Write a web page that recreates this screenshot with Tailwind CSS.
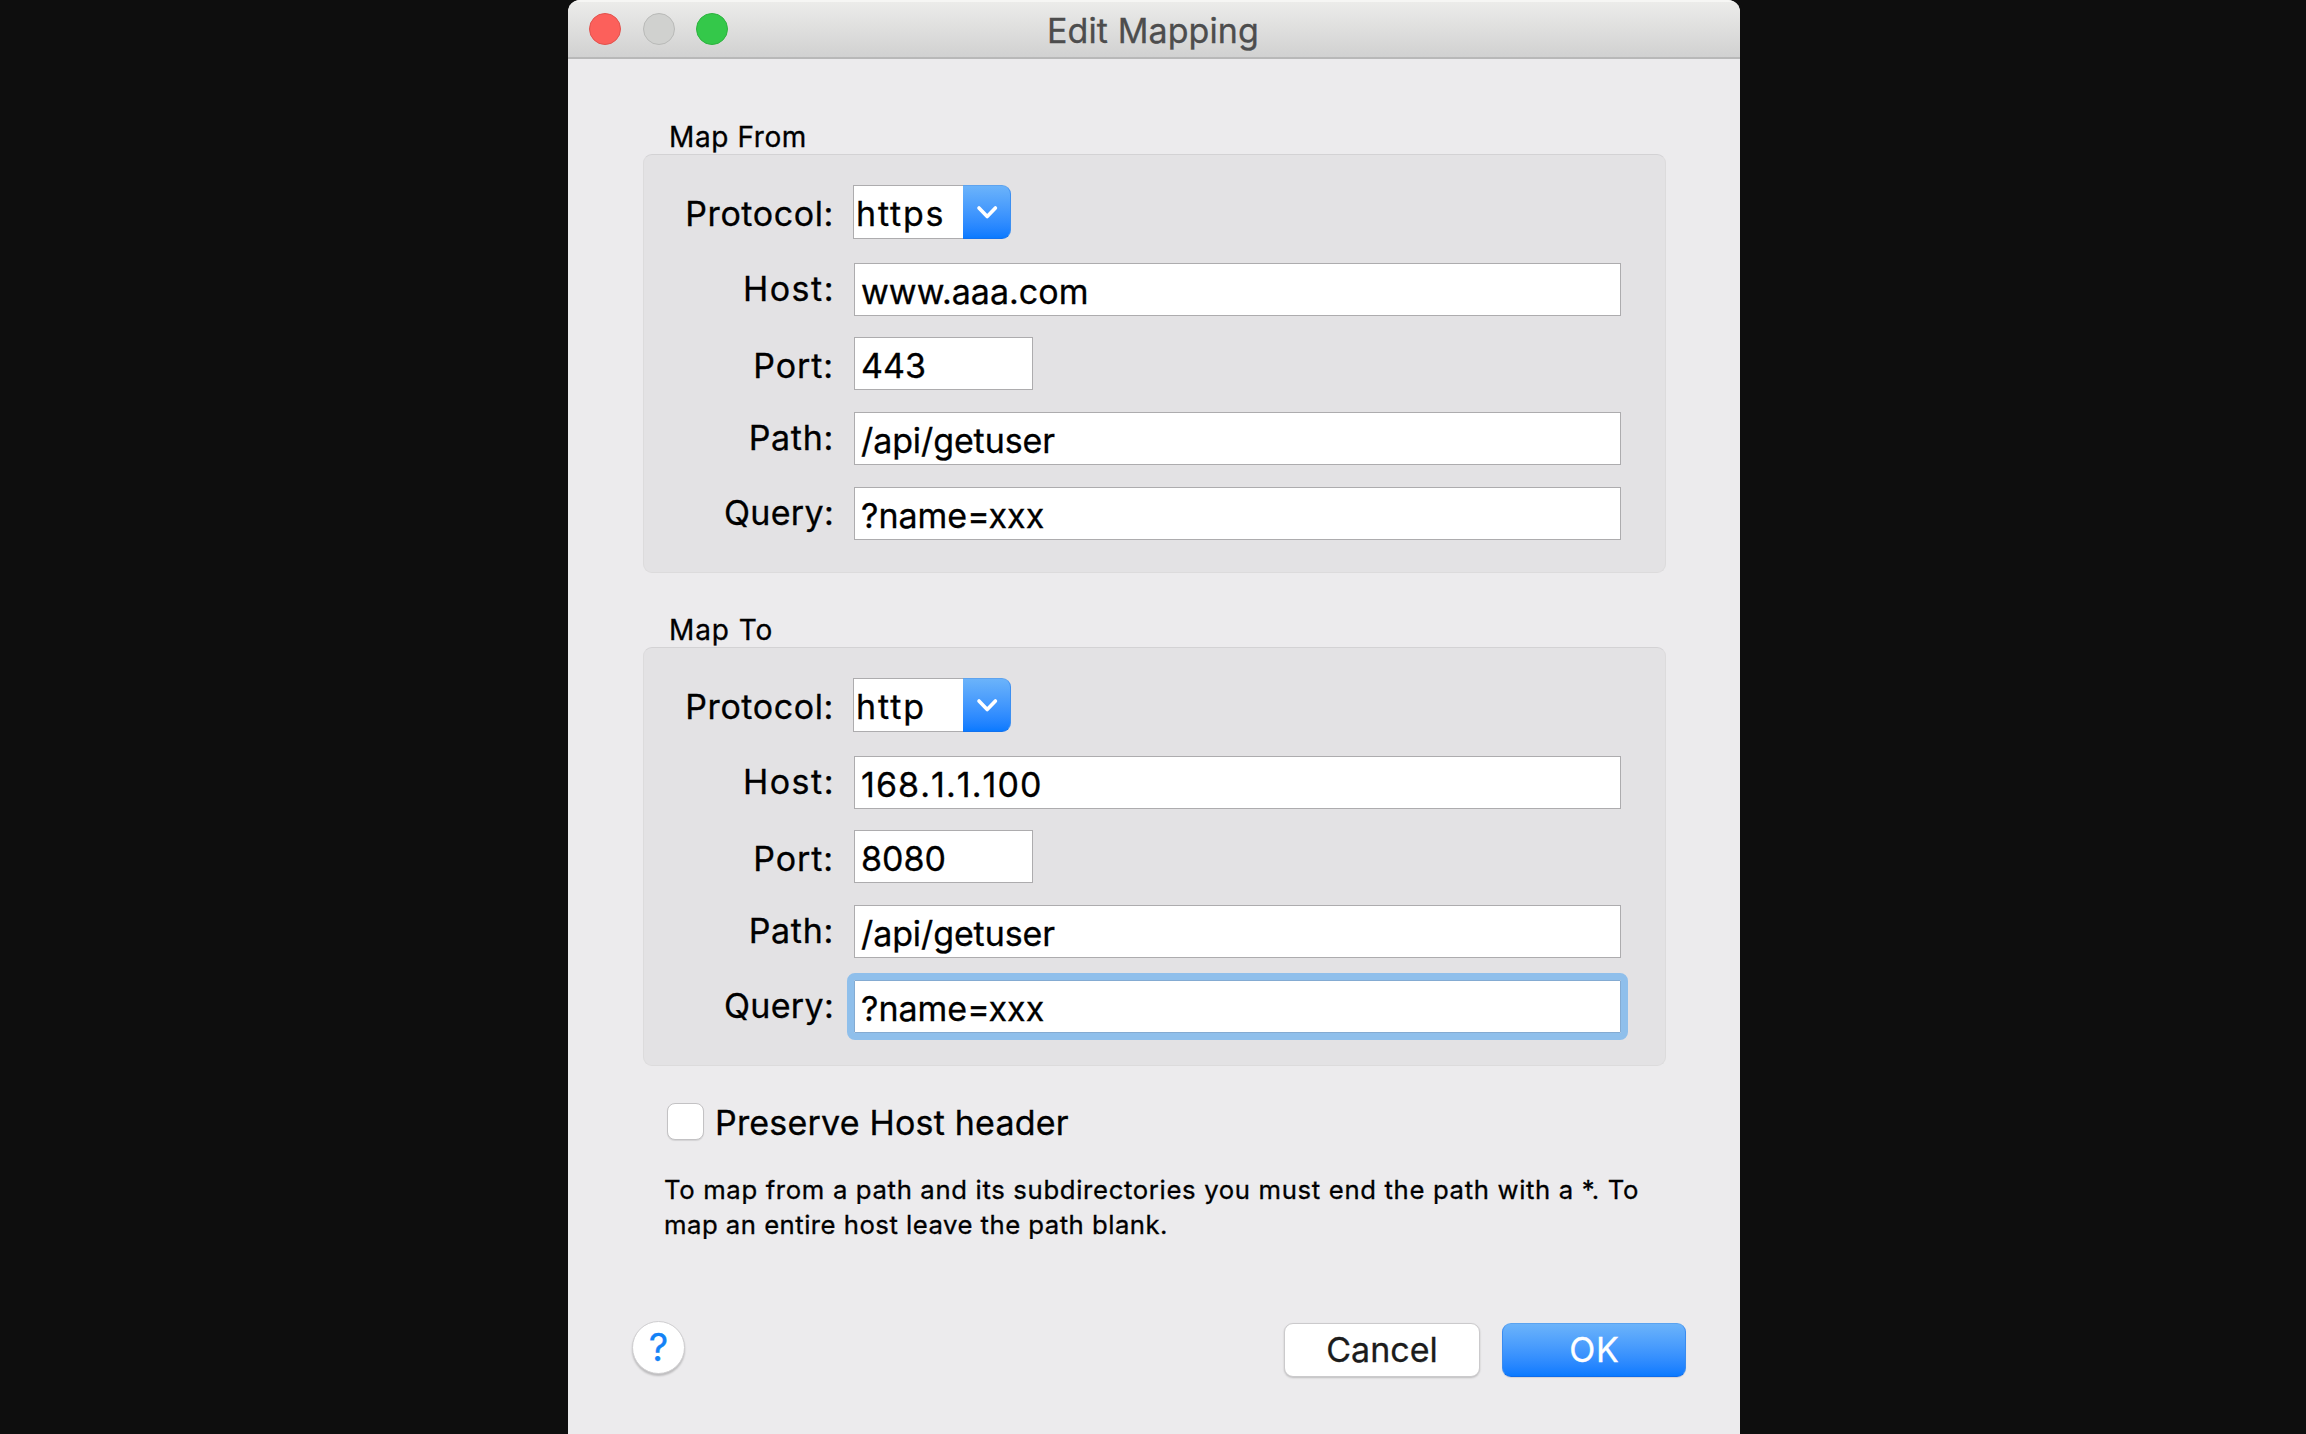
<!DOCTYPE html>
<html lang="en">
<head>
<meta charset="utf-8">
<title>Edit Mapping</title>
<script src="https://cdn.jsdelivr.net/npm/@tailwindcss/browser@4"></script>
</head>
<body class="h-screen overflow-hidden bg-[#0e0e0e] font-['Inter',sans-serif] text-[34px] text-black [-webkit-text-stroke:0.3px]">
<main class="ml-[568px] flex h-[1434px] w-[1172px] flex-col overflow-hidden rounded-t-[12px] bg-[#ecebed]">

  <!-- Title bar -->
  <header class="flex h-[59px] shrink-0 items-start border-t-2 border-b-2 border-t-[#f6f6f4] border-b-[#b8b8b8] bg-linear-to-b from-[#ececea] to-[#d1d1d1] pt-[11px] pl-[21px]">
    <span class="size-8 rounded-full border border-[#e2524d] bg-[#fc605b]"></span>
    <span class="ml-[22px] size-8 rounded-full border border-[#b9bab8] bg-[#d0d1cf]"></span>
    <span class="ml-[21px] size-8 rounded-full border border-[#2db33f] bg-[#34c84a]"></span>
    <h1 class="mt-px ml-[319px] leading-[34px] tracking-[0.1px] whitespace-nowrap text-[#4d4d4d]">Edit Mapping</h1>
  </header>

  <!-- Map From -->
  <h2 class="mt-[61px] ml-[101px] h-[34px] text-[28px] leading-[34px] tracking-[0.6px]">Map From</h2>
  <section class="ml-[75px] flex h-[419px] w-[1023px] shrink-0 flex-col rounded-[9px] border border-[#dcdbdc] border-t-[#d3d2d4] bg-[#e3e2e4] pt-[30px] leading-[53px]">
    <div class="flex h-[54px]">
      <span class="w-[190px] pt-[2px] text-right tracking-[0.6px]">Protocol:</span>
      <div class="ml-[19px] flex h-[54px]">
        <span class="w-[110px] border border-r-0 border-[#adacae] bg-white pt-px pl-[2px] tracking-[1.8px]">https</span>
        <span class="flex w-[48px] items-center justify-center rounded-r-[9px] border border-l-0 border-t-[#5ea3ee] border-r-[#3d8ff0] border-b-[#1272ee] bg-linear-to-b from-[#6bb3fa] to-[#097aff]">
          <svg class="size-6" viewBox="0 0 24 24" fill="none" stroke="white" stroke-width="3.6" stroke-linecap="round" stroke-linejoin="round"><path d="M4 8 12.2 16.5 20.4 8"/></svg>
        </span>
      </div>
    </div>
    <div class="mt-[24px] flex h-[53px]">
      <span class="-mt-px w-[191px] text-right tracking-[1.5px]">Host:</span>
      <span class="ml-[19px] w-[767px] border border-[#adacae] bg-white pt-px pl-[6px]">www.aaa.com</span>
    </div>
    <div class="mt-[21px] flex h-[53px]">
      <span class="w-[190px] pt-[2px] text-right tracking-[0.9px]">Port:</span>
      <span class="ml-[20px] w-[179px] border border-[#adacae] bg-white pt-px pl-[6px]">443</span>
    </div>
    <div class="mt-[22px] flex h-[53px]">
      <span class="-mt-px w-[190px] text-right tracking-[0.7px]">Path:</span>
      <span class="ml-[20px] w-[767px] border border-[#adacae] bg-white pt-px pl-[6px] tracking-[-0.1px]">/api/getuser</span>
    </div>
    <div class="mt-[22px] flex h-[53px]">
      <span class="-mt-px w-[190px] text-right tracking-[0.3px]">Query:</span>
      <span class="ml-[20px] w-[767px] border border-[#adacae] bg-white pt-px pl-[6px]">?name=xxx</span>
    </div>
  </section>

  <!-- Map To -->
  <h2 class="mt-[40px] ml-[101px] h-[34px] text-[28px] leading-[34px] tracking-[0.9px]">Map To</h2>
  <section class="ml-[75px] flex h-[419px] w-[1023px] shrink-0 flex-col rounded-[9px] border border-[#dcdbdc] border-t-[#d3d2d4] bg-[#e3e2e4] pt-[30px] leading-[53px]">
    <div class="flex h-[54px]">
      <span class="w-[190px] pt-[2px] text-right tracking-[0.6px]">Protocol:</span>
      <div class="ml-[19px] flex h-[54px]">
        <span class="w-[110px] border border-r-0 border-[#adacae] bg-white pt-px pl-[2px] tracking-[1.9px]">http</span>
        <span class="flex w-[48px] items-center justify-center rounded-r-[9px] border border-l-0 border-t-[#5ea3ee] border-r-[#3d8ff0] border-b-[#1272ee] bg-linear-to-b from-[#6bb3fa] to-[#097aff]">
          <svg class="size-6" viewBox="0 0 24 24" fill="none" stroke="white" stroke-width="3.6" stroke-linecap="round" stroke-linejoin="round"><path d="M4 8 12.2 16.5 20.4 8"/></svg>
        </span>
      </div>
    </div>
    <div class="mt-[24px] flex h-[53px]">
      <span class="-mt-px w-[191px] text-right tracking-[1.5px]">Host:</span>
      <span class="ml-[19px] w-[767px] border border-[#adacae] bg-white pt-px pl-[6px] tracking-[1.07px] [font-kerning:none]">168.1.1.100</span>
    </div>
    <div class="mt-[21px] flex h-[53px]">
      <span class="w-[190px] pt-[2px] text-right tracking-[0.9px]">Port:</span>
      <span class="ml-[20px] w-[179px] border border-[#adacae] bg-white pt-px pl-[6px]">8080</span>
    </div>
    <div class="mt-[22px] flex h-[53px]">
      <span class="-mt-px w-[190px] text-right tracking-[0.7px]">Path:</span>
      <span class="ml-[20px] w-[767px] border border-[#adacae] bg-white pt-px pl-[6px] tracking-[-0.1px]">/api/getuser</span>
    </div>
    <div class="mt-[22px] flex h-[53px]">
      <span class="-mt-px w-[190px] text-right tracking-[0.3px]">Query:</span>
      <span class="ml-[20px] w-[767px] rounded-[1px] border border-[#84abd2] bg-white pt-px pl-[6px] outline-[7px] outline-[#8fbfeb]">?name=xxx</span>
    </div>
  </section>

  <label class="mt-[37px] ml-[99px] flex h-[37px] items-start">
    <span class="size-[37px] rounded-[8px] border border-[#c3c2c4] bg-white shadow-[0_1px_1px_#0000001a]"></span>
    <span class="mt-px ml-[11px] leading-[37px] tracking-[0.2px]">Preserve Host header</span>
  </label>

  <p class="mt-[32px] ml-[96px] text-[25.7px] leading-[35px] whitespace-nowrap"><span class="tracking-[0.66px]">To map from a path and its subdirectories you must end the path with a *. To</span><br><span class="tracking-[0.49px]">map an entire host leave the path blank.</span></p>

  <!-- Actions -->
  <footer class="mt-[78px] flex items-start">
    <button class="mt-px ml-[64px] flex size-[53px] items-center justify-center rounded-full border border-[#cfced0] bg-white text-[38px] leading-[53px] text-[#1482f6] shadow-[0_2px_2px_#00000033]">?</button>
    <button class="mt-[3px] ml-[599px] h-[54px] w-[196px] rounded-[9px] border border-[#cbcacc] bg-white leading-[52px] text-[#1c1c1c] shadow-[0_1px_2px_#00000033]">Cancel</button>
    <button class="mt-[3px] ml-[22px] h-[54px] w-[184px] rounded-[9px] border border-t-[#5aa3f0] border-x-[#3a8cf0] border-b-[#0f6bea] bg-linear-to-b from-[#6bb3fa] to-[#097aff] pl-px leading-[52px] tracking-[0.8px] text-white shadow-[0_1px_1px_#0000001a]">OK</button>
  </footer>
</main>
</body>
</html>
